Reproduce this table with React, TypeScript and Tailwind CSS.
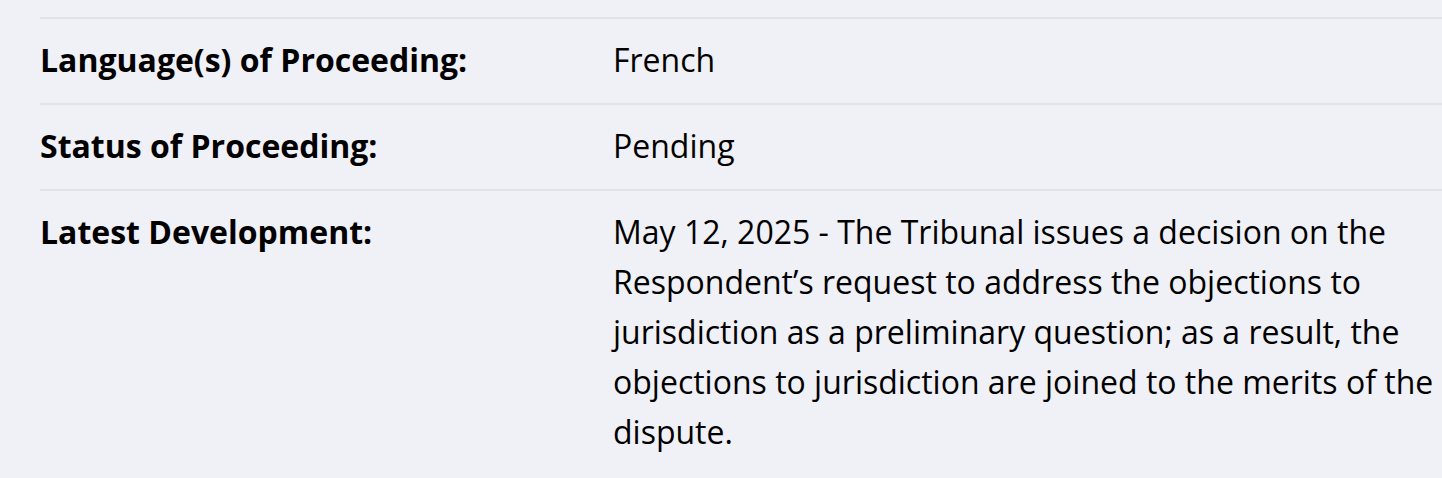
export default function App() {
  const rows: { label: string; value: string }[] = [
    { label: "Language(s) of Proceeding:", value: "French" },
    { label: "Status of Proceeding:", value: "Pending" },
    {
      label: "Latest Development:",
      value:
        "May 12, 2025 - The Tribunal issues a decision on the Respondent\u2019s request to address the objections to jurisdiction as a preliminary question; as a result, the objections to jurisdiction are joined to the merits of the dispute.",
    },
  ];
  return (
    <div
      className="min-h-screen w-full bg-[#f0f1f7] pl-[40px] pt-[17px] text-black"
      style={{ fontFamily: '"Open Sans", "Noto Sans", sans-serif' }}
    >
      {rows.map((r) => (
        <div
          key={r.label}
          className="flex border-t-2 border-[#dfe4ec] pt-[16px] pb-[18px] text-[32px] leading-[50px]"
        >
          <div className="w-[573px] shrink-0 font-bold">{r.label}</div>
          <div className="flex-1 pr-[6px]">{r.value}</div>
        </div>
      ))}
    </div>
  );
}
